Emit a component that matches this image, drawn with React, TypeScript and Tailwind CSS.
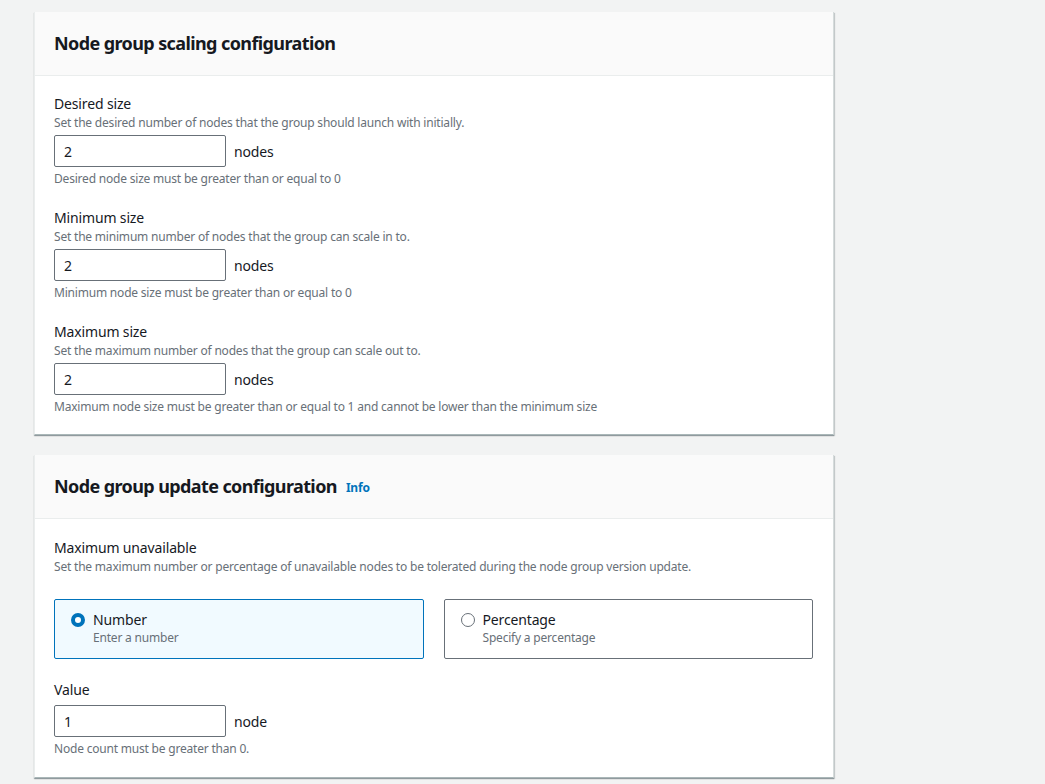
import React from "react";

// Node group config form — two stacked cards, AWS console look.

const font = { fontFamily: '"Noto Sans", "Open Sans", Arial, sans-serif' };

interface SizeFieldProps {
  label: string;
  description: string;
  value: string;
  unit: string;
  hint: string;
}

function SizeField({ label, description, value, unit, hint }: SizeFieldProps): React.JSX.Element {
  return (
    <div>
      <div className="text-[14px] leading-[22px] tracking-[-0.15px] text-[#16191f]">{label}</div>
      <div className="text-[12px] leading-[16px] tracking-[-0.2px] text-[#687078]">{description}</div>
      <div className="mt-[4px] flex items-center gap-[8px]">
        <div className="flex h-[32px] w-[172px] items-center rounded-[2px] border border-[#687078] bg-white px-[9px] text-[14px] text-[#16191f]">
          {value}
        </div>
        <span className="text-[14px] tracking-[-0.15px] text-[#16191f]">{unit}</span>
      </div>
      <div className="mt-[4px] text-[12px] leading-[16px] tracking-[-0.2px] text-[#687078]">{hint}</div>
    </div>
  );
}

function Card({ title, info, children }: { title: string; info?: boolean; children: React.ReactNode }) {
  return (
    <section className="w-[800px] border-b border-l border-r border-b-[#aab7b8] border-l-[#eaeded] border-r-[#d5dbdb] bg-white shadow-[0_1px_1px_0_rgba(0,28,36,0.3),1px_1px_1px_0_rgba(0,28,36,0.15)]">
      <div className="flex h-[64px] items-center gap-[9px] border-b border-[#eaeded] bg-[#fafafa] pl-[19px] pr-[20px]">
        <h2 className="text-[18px] font-bold tracking-[-0.6px] text-[#16191f]">{title}</h2>
        {info && <span className="mt-[3px] text-[12px] font-bold tracking-[-0.2px] text-[#0073bb]">Info</span>}
      </div>
      <div className="pb-[20px] pl-[19px] pr-[20px] pt-[17px]">{children}</div>
    </section>
  );
}

function RadioTile({ selected, title, sub }: { selected: boolean; title: string; sub: string }) {
  return (
    <div
      className={
        selected
          ? "flex h-[60px] flex-1 gap-[8px] rounded-[2px] border border-[#0073bb] bg-[#f1faff] px-[16px] pt-[10px]"
          : "flex h-[60px] flex-1 gap-[8px] rounded-[2px] border border-[#687078] bg-white px-[16px] pt-[10px]"
      }
    >
      <div className="pt-[3px]">
        {selected ? (
          <div className="h-[14px] w-[14px] rounded-full border-[4px] border-[#0073bb] bg-white" />
        ) : (
          <div className="h-[14px] w-[14px] rounded-full border-[1.5px] border-[#687078] bg-white" />
        )}
      </div>
      <div>
        <div className="text-[14px] leading-[20px] tracking-[-0.15px] text-[#16191f]">{title}</div>
        <div className="text-[12px] leading-[16px] tracking-[-0.2px] text-[#687078]">{sub}</div>
      </div>
    </div>
  );
}

export default function App(): React.JSX.Element {
  return (
    <div style={font} className="min-h-[784px] bg-[#f2f3f3] pl-[34px] pt-[12px]">
      <div className="flex flex-col gap-[20px]">
        <Card title="Node group scaling configuration">
          <div className="-mb-[1px] flex flex-col gap-[20px]">
            <SizeField
              label="Desired size"
              description="Set the desired number of nodes that the group should launch with initially."
              value="2"
              unit="nodes"
              hint="Desired node size must be greater than or equal to 0"
            />
            <SizeField
              label="Minimum size"
              description="Set the minimum number of nodes that the group can scale in to."
              value="2"
              unit="nodes"
              hint="Minimum node size must be greater than or equal to 0"
            />
            <SizeField
              label="Maximum size"
              description="Set the maximum number of nodes that the group can scale out to."
              value="2"
              unit="nodes"
              hint="Maximum node size must be greater than or equal to 1 and cannot be lower than the minimum size"
            />
          </div>
        </Card>
        <Card title="Node group update configuration" info>
          <div className="mt-[1px] text-[14px] leading-[22px] tracking-[-0.15px] text-[#16191f]">Maximum unavailable</div>
          <div className="text-[12px] leading-[16px] tracking-[-0.2px] text-[#687078]">
            Set the maximum number or percentage of unavailable nodes to be tolerated during the node group version update.
          </div>
          <div className="mt-[24px] flex gap-[20px]">
            <RadioTile selected title="Number" sub="Enter a number" />
            <RadioTile selected={false} title="Percentage" sub="Specify a percentage" />
          </div>
          <div className="mt-[20px]">
            <div className="text-[14px] leading-[22px] tracking-[-0.15px] text-[#16191f]">Value</div>
            <div className="mt-[4px] flex items-center gap-[8px]">
              <div className="flex h-[32px] w-[172px] items-center rounded-[2px] border border-[#687078] bg-white px-[9px] text-[14px] text-[#16191f]">
                1
              </div>
              <span className="text-[14px] tracking-[-0.15px] text-[#16191f]">node</span>
            </div>
            <div className="mt-[4px] text-[12px] leading-[16px] tracking-[-0.2px] text-[#687078]">Node count must be greater than 0.</div>
          </div>
        </Card>
      </div>
    </div>
  );
}
